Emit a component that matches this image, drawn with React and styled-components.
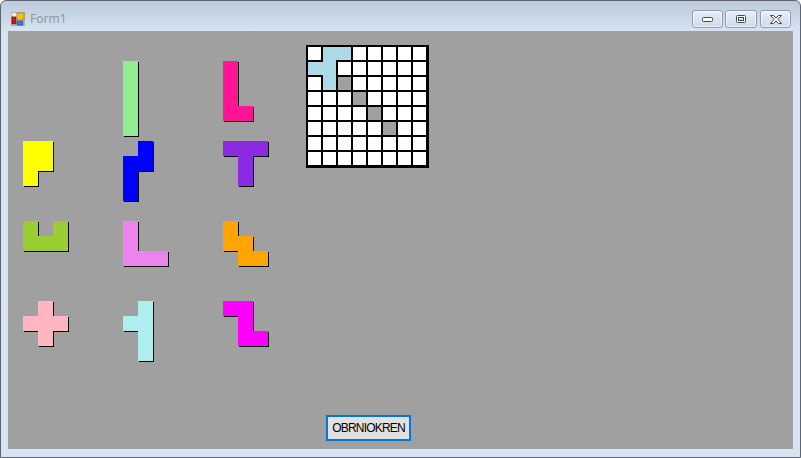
import React from 'react';
import styled, { createGlobalStyle } from 'styled-components';

/*-------------------- Data --------------------*/

// pentominoes in the tray, row by row (null = empty slot)
const PIECES = [
  null,
  { color: '#90ee90', cells: [[0, 0], [1, 0], [2, 0], [3, 0], [4, 0]] },
  { color: '#ff1493', cells: [[0, 0], [1, 0], [2, 0], [3, 0], [3, 1]] },
  { color: '#ffff00', cells: [[0, 0], [0, 1], [1, 0], [1, 1], [2, 0]] },
  { color: '#0000ff', cells: [[0, 1], [1, 1], [1, 0], [2, 0], [3, 0]] },
  { color: '#8a2be2', cells: [[0, 0], [0, 1], [0, 2], [1, 1], [2, 1]] },
  { color: '#9acd32', cells: [[0, 0], [0, 2], [1, 0], [1, 1], [1, 2]] },
  { color: '#ee82ee', cells: [[0, 0], [1, 0], [2, 0], [2, 1], [2, 2]] },
  { color: '#ffa500', cells: [[0, 0], [1, 0], [1, 1], [2, 1], [2, 2]] },
  { color: '#ffb6c1', cells: [[0, 1], [1, 0], [1, 1], [1, 2], [2, 1]] },
  { color: '#afeeee', cells: [[0, 1], [1, 0], [1, 1], [2, 1], [3, 1]] },
  { color: '#ff00ff', cells: [[0, 0], [0, 1], [1, 1], [2, 1], [2, 2]] },
];

// the piece already dropped on the board, and the blocked squares
const PLACED = [[0, 1], [0, 2], [1, 0], [1, 1], [2, 1]];
const BLOCKED = [[2, 2], [3, 3], [4, 4], [5, 5]];
const SIZE = 8;

const has = (list, r, c) => list.some(([a, b]) => a === r && b === c);

/*-------------------- Styled Components --------------------*/

const GlobalStyle = createGlobalStyle`
  html, body {
    margin: 0;
    padding: 0;
    background: #ffffff;
  }
`;

const Window = styled.div`
  width: 801px;
  height: 458px;
  box-sizing: border-box;
  border: 1px solid #5c6673;
  border-radius: 6px 6px 0 0;
  background: linear-gradient(#bccad9, #d6e3f1 30px, #d6e3f1);
  padding: 0 7px 8px;
  display: flex;
  flex-direction: column;
  font-family: "Liberation Sans", Arial, sans-serif;
`;

const TitleBar = styled.div`
  height: 30px;
  display: flex;
  align-items: flex-start;
  flex-shrink: 0;
`;

const AppIcon = styled.svg`
  margin: 11px 0 0 3px;
  flex-shrink: 0;
`;

const Caption = styled.span`
  margin: 10px 0 0 5px;
  font-family: "Noto Sans", sans-serif;
  font-size: 12px;
  line-height: 16px;
  color: #8c99a7;
`;

const CaptionButtons = styled.div`
  margin: 9px 2px 0 auto;
  display: flex;
  gap: 2px;
`;

const CaptionButton = styled.div`
  width: ${(p) => p.$w}px;
  height: 18px;
  box-sizing: border-box;
  margin-left: ${(p) => p.$gap || 0}px;
  border: 1px solid #8d9cb0;
  border-radius: 3px;
  background: linear-gradient(#e9f0f8, #d9e4f1 50%, #cfdcec);
  box-shadow: inset 0 0 0 1px rgba(255, 255, 255, 0.6);
  display: flex;
  align-items: center;
  justify-content: center;
`;

const Client = styled.div`
  flex: 1;
  background: #a0a0a0;
  display: flex;
  flex-direction: column;
`;

const Workspace = styled.div`
  display: flex;
  align-items: flex-start;
`;

const Tray = styled.div`
  margin: 30px 0 0 15px;
  display: grid;
  grid-template-columns: 100px 100px 83px;
  grid-auto-rows: 80px;
`;

const Piece = styled.div`
  display: grid;
  grid-template-columns: repeat(5, 15px);
  grid-template-rows: repeat(5, 15px);
  align-self: start;
  justify-self: start;
  filter: drop-shadow(1px 1px 0 #000000);
`;

const Square = styled.div`
  grid-row: ${(p) => p.$r + 1};
  grid-column: ${(p) => p.$c + 1};
  background: ${(p) => p.$color};
`;

const Board = styled.div`
  margin-top: 14px;
  display: grid;
  grid-template-columns: repeat(${SIZE}, 13px);
  grid-auto-rows: 13px;
  gap: 2px;
  border: 2px solid #000000;
  border-right-width: 3px;
  border-bottom-width: 3px;
  background: #000000;
`;

const Cell = styled.div`
  background: ${(p) => (p.$tone === 'blue' ? '#add8e6' : p.$tone === 'gray' ? '#a0a0a0' : '#ffffff')};
  box-shadow: ${(p) => p.$fill || 'none'};
`;

const Footer = styled.div`
  margin-top: auto;
  padding: 0 0 8px 318px;
  display: flex;
`;

const Button = styled.button`
  width: 85px;
  height: 26px;
  box-sizing: border-box;
  border: 2px solid #0078d7;
  background: #e1e1e1;
  color: #000000;
  padding: 0;
  font-family: "Liberation Sans", Arial, sans-serif;
  font-size: 12px;
  letter-spacing: -0.8px;
  cursor: pointer;
`;

/*-------------------- Functional Component --------------------*/

function boardCells() {
  const cells = [];
  for (let r = 0; r < SIZE; r++) {
    for (let c = 0; c < SIZE; c++) {
      let tone = 'white';
      let fill = null;
      if (has(PLACED, r, c)) {
        tone = 'blue';
        // close the grid lines between squares of the same piece
        const shadows = [];
        if (has(PLACED, r, c + 1)) shadows.push('2px 0 0 #add8e6');
        if (has(PLACED, r + 1, c)) shadows.push('0 2px 0 #add8e6');
        fill = shadows.join(', ') || null;
      } else if (has(BLOCKED, r, c)) {
        tone = 'gray';
      }
      cells.push(<Cell key={r + '-' + c} $tone={tone} $fill={fill} />);
    }
  }
  return cells;
}

function App() {
  return (
    <>
      <GlobalStyle />
      <Window>
        <TitleBar>
          <AppIcon width="14" height="14" viewBox="0 0 14 14">
            <rect x="0.5" y="0.5" width="13" height="13" fill="#e8ecf0" stroke="#a9b1ba" />
            <rect x="1" y="5" width="4" height="7" fill="#d0161b" stroke="#7d0b0e" strokeWidth="0.8" />
            <rect x="6" y="1" width="7" height="7" fill="#f6c21a" stroke="#b07d0a" strokeWidth="0.8" />
            <rect x="6" y="9" width="6" height="4" fill="#3a7ee0" stroke="#1f4f9a" strokeWidth="0.8" />
          </AppIcon>
          <Caption>Form1</Caption>
          <CaptionButtons>
            <CaptionButton $w={31}>
              <svg width="11" height="5" viewBox="0 0 11 5">
                <rect x="0.5" y="0.5" width="10" height="4" rx="1" fill="#ffffff" stroke="#404a57" />
              </svg>
            </CaptionButton>
            <CaptionButton $w={32}>
              <svg width="10" height="8" viewBox="0 0 10 8">
                <rect x="0.5" y="0.5" width="9" height="7" rx="1" fill="#ffffff" stroke="#404a57" />
                <rect x="2.5" y="2.5" width="5" height="3" fill="#d8e2ee" stroke="#404a57" />
              </svg>
            </CaptionButton>
            <CaptionButton $w={31} $gap={1}>
              <svg width="12" height="9" viewBox="0 0 12 9">
                <path
                  d="M0.5 0.5 H3.5 L6 3 L8.5 0.5 H11.5 L8 4.5 L11.5 8.5 H8.5 L6 6 L3.5 8.5 H0.5 L4 4.5 Z"
                  fill="#ffffff"
                  stroke="#404a57"
                  strokeLinejoin="round"
                />
              </svg>
            </CaptionButton>
          </CaptionButtons>
        </TitleBar>
        <Client>
          <Workspace>
            <Tray>
              {PIECES.map((piece, i) =>
                piece ? (
                  <Piece key={i}>
                    {piece.cells.map(([r, c]) => (
                      <Square key={r + '-' + c} $r={r} $c={c} $color={piece.color} />
                    ))}
                  </Piece>
                ) : (
                  <div key={i} />
                )
              )}
            </Tray>
            <Board>{boardCells()}</Board>
          </Workspace>
          <Footer>
            <Button>OBRNIOKREN</Button>
          </Footer>
        </Client>
      </Window>
    </>
  );
}

export default App;
